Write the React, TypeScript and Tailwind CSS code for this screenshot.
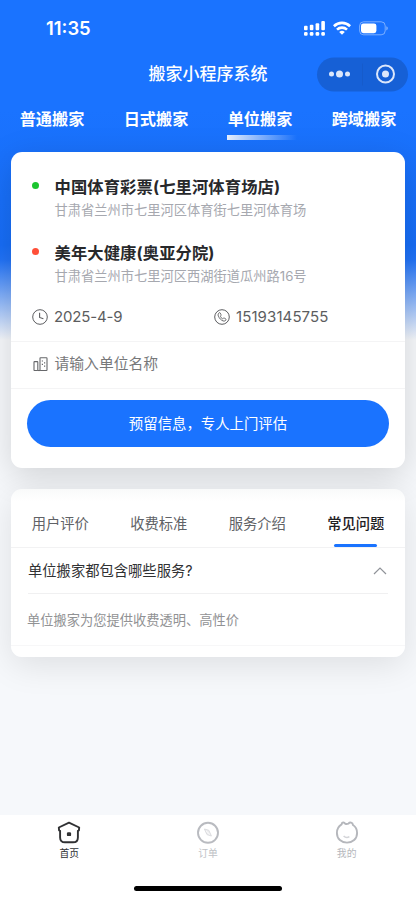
import React from "react";

interface Place {
  name: string;
  address: string;
  dot: string;
}

const serviceTabs = ["普通搬家", "日式搬家", "单位搬家", "跨域搬家"];
const infoTabs = ["用户评价", "收费标准", "服务介绍", "常见问题"];

const places: Place[] = [
  {
    name: "中国体育彩票(七里河体育场店)",
    address: "甘肃省兰州市七里河区体育街七里河体育场",
    dot: "bg-[#1bc52f]",
  },
  {
    name: "美年大健康(奥亚分院)",
    address: "甘肃省兰州市七里河区西湖街道瓜州路16号",
    dot: "bg-[#ff4f38]",
  },
];

const SignalIcon = () => (
  <svg width="21" height="15" viewBox="0 0 21 15" fill="#fff">
    <rect x="0" y="4.8" width="3.6" height="4.4" rx="1" />
    <rect x="5.8" y="3.8" width="3.6" height="5.4" rx="1" />
    <rect x="11.6" y="2.2" width="3.6" height="7" rx="1" />
    <rect x="17.3" y="0" width="3.6" height="9.2" rx="1" />
    <rect x="0" y="11" width="3.6" height="3.8" rx="1.2" />
    <rect x="5.8" y="11" width="3.6" height="3.8" rx="1.2" />
    <rect x="11.6" y="11" width="3.6" height="3.8" rx="1.2" />
    <rect x="17.3" y="11" width="3.6" height="3.8" rx="1.2" />
  </svg>
);

const WifiIcon = () => (
  <svg width="18" height="14" viewBox="0 0 18 14" fill="none" stroke="#fff" strokeWidth="2.6">
    <path d="M0.9 5.2 A11.6 11.6 0 0 1 17.1 5.2" />
    <path d="M4 8.6 A7.2 7.2 0 0 1 14 8.6" />
    <path d="M6.2 10.9 A4.2 4.2 0 0 1 11.8 10.9 L9 13.8 Z" fill="#fff" stroke="none" />
  </svg>
);

const BatteryIcon = () => (
  <svg width="30" height="15" viewBox="0 0 30 15">
    <rect x="0.6" y="0.8" width="25.6" height="13" rx="4" fill="none" stroke="#fff" strokeOpacity="0.42" />
    <rect x="2" y="2.4" width="15.4" height="9.8" rx="2.4" fill="#fff" />
    <path d="M27.4 5.2 C29.2 5.8 29.2 8.8 27.4 9.4 Z" fill="#fff" fillOpacity="0.5" />
  </svg>
);

const ClockIcon = () => (
  <svg width="16" height="16" viewBox="0 0 16 16" fill="none" stroke="#5c5d60" strokeWidth="1">
    <circle cx="8" cy="8" r="7.3" />
    <path d="M7.6 3.8 V8.4 L11.4 9.8" strokeWidth="1.1" />
  </svg>
);

const PhoneIcon = () => (
  <svg width="16" height="16" viewBox="0 0 16 16" fill="none" stroke="#5c5d60" strokeWidth="1">
    <circle cx="8" cy="8" r="7.3" />
    <path
      d="M5.4 3.7 C4.2 4.4 3.7 5.6 4.4 7.2 C5.4 9.4 7 11.1 9 11.9 C10.5 12.4 11.7 11.9 12 10.6 C12.1 10.2 12 10 11.6 9.8 L10.3 9.1 C9.9 8.9 9.6 9 9.3 9.4 C9 9.9 8.6 9.9 8.1 9.5 C7.4 9 6.9 8.4 6.6 7.8 C6.3 7.2 6.4 6.9 6.8 6.6 C7.2 6.3 7.2 6 7 5.6 L6.2 4 C6 3.6 5.8 3.5 5.4 3.7 Z"
      strokeWidth="0.9"
    />
  </svg>
);

const BuildingIcon = () => (
  <svg width="15" height="15" viewBox="0 0 15 15" fill="none" stroke="#66676a" strokeWidth="1.1">
    <rect x="1" y="4.6" width="3.8" height="8.9" rx="0.6" />
    <rect x="7" y="0.8" width="7" height="12.7" rx="0.6" />
    <path d="M4.8 13.5 H7" />
    <path d="M8.8 4 H10 M11 5.8 H12.2 M8.8 7.4 H10 M11 9.2 H12.2" strokeWidth="1.2" />
  </svg>
);

const HomeIcon = () => (
  <svg width="24" height="24" viewBox="0 0 24 24" fill="none" stroke="#303133" strokeWidth="1.9" strokeLinejoin="round">
    <path d="M12 1.6 L22.2 6.5 L21.9 9.4 L20.9 9.8 V16.4 Q20.9 21.3 16 21.3 H8 Q3.1 21.3 3.1 16.4 V9.8 L2.1 9.4 L1.8 6.5 Z" />
    <rect x="9.9" y="11.2" width="4.2" height="3.9" rx="1.2" fill="#303133" stroke="none" />
  </svg>
);

const OrderIcon = () => (
  <svg width="24" height="24" viewBox="0 0 24 24" fill="none" stroke="#b9bbc0" strokeWidth="1.9">
    <circle cx="12" cy="11.8" r="10" />
    <path d="M8.4 8 L12.8 9.3 L15.4 15 L11 13.6 Z" fill="#ececee" stroke="#dcdde0" strokeWidth="1" />
    <path d="M10 9.8 L13.8 13.4" stroke="#fff" strokeWidth="0.8" />
  </svg>
);

const MineIcon = () => (
  <svg width="24" height="24" viewBox="0 0 24 24" fill="none" stroke="#b5b7bc" strokeWidth="1.9" strokeLinejoin="round">
    <path d="M6.6 3.4 C6.8 1.2 9.2 0.9 10.2 2.8 Q12 3.2 13.4 2.6 C15 0.8 17.6 1.4 18 4 C20.8 5.8 22.1 8.8 22.1 12 C22.1 18 17.6 21.6 12 21.6 C6.4 21.6 1.9 18 1.9 12 C1.9 8.4 3.6 5.2 6.6 3.4 Z" />
    <path d="M8.6 15 Q11.4 17.8 14.4 15.6" stroke="#d3d4d8" strokeWidth="1.5" />
  </svg>
);

const navItems = [
  { label: "首页", icon: <HomeIcon />, color: "text-[#303133]" },
  { label: "订单", icon: <OrderIcon />, color: "text-[#c0c2c6]" },
  { label: "我的", icon: <MineIcon />, color: "text-[#b5b7bc]" },
];

const StatusBar: React.FC = () => (
  <div className="flex h-[56px] items-center justify-between pl-[46px] pr-[27px] text-white">
    <span className="text-[18.4px] font-semibold leading-[24px]">11:35</span>
    <div className="flex items-center">
      <SignalIcon />
      <span className="w-[8px]" />
      <WifiIcon />
      <span className="w-[8px]" />
      <BatteryIcon />
    </div>
  </div>
);

const TitleBar: React.FC = () => (
  <div className="grid h-[35px] grid-cols-[99px_1fr_99px] items-center text-white">
    <span />
    <h1 className="text-center text-[17px] font-medium leading-[24px]">搬家小程序系统</h1>
    <div className="flex h-[34px] w-[91px] translate-y-[0.5px] items-center rounded-full bg-[#1660d6]">
      <div className="flex flex-1 items-center justify-center gap-[2px]">
        <i className="size-[5px] rounded-full bg-[#dce7fb]" />
        <i className="size-[7px] rounded-full bg-[#dce7fb]" />
        <i className="size-[5px] rounded-full bg-[#dce7fb]" />
      </div>
      <i className="h-[22px] w-px bg-[#165bcb]" />
      <div className="flex flex-1 items-center justify-center">
        <div className="flex size-[19px] items-center justify-center rounded-full border-2 border-[#dce7fb]">
          <i className="size-[7px] rounded-full bg-[#dce7fb]" />
        </div>
      </div>
    </div>
  </div>
);

const App: React.FC = () => {
  return (
    <div
      className="flex h-[900px] w-[416px] flex-col overflow-hidden bg-[#f6f8fb] bg-[linear-gradient(180deg,#1a73ff_0px,#1a73ff_110px,#176df6_245px,#2273f7_260px,#f6f8fb_340px)]"
      style={{ fontFamily: 'Inter, "Noto Sans CJK SC", sans-serif' }}
    >
      <StatusBar />
      <TitleBar />

      <div className="grid h-[61px] grid-cols-4 pt-[16px] text-white">
        {serviceTabs.map((tab, index) => (
          <div key={tab} className="flex flex-col items-center">
            <span className="text-[16.2px] font-bold leading-[24px]">{tab}</span>
            {index === 2 && (
              <i className="ml-[4px] mt-[4px] h-[5px] w-[70px] bg-gradient-to-r from-white/90 to-white/0" />
            )}
          </div>
        ))}
      </div>

      <section className="mx-[11px] h-[316px] shrink-0 rounded-[11px] bg-white shadow-[0_8px_34px_rgba(0,0,0,0.15)]">
        <div className="flex h-[189px] flex-col px-[21px] pt-[23px]">
          {places.map((place) => (
            <div key={place.name} className="flex h-[66px] gap-[16px]">
              <i className={`mt-[7px] size-[6.5px] rounded-full ${place.dot}`} />
              <div>
                <p className="text-[16.3px] font-bold leading-[24px] tracking-[0.12px] text-[#27282b]">{place.name}</p>
                <p className="text-[13.25px] leading-[22px] text-[#a6a8af]">{place.address}</p>
              </div>
            </div>
          ))}
          <div className="grid grid-cols-2 text-[15px] leading-[20px] text-[#5c5d60]">
            <div className="flex items-center gap-[6px]">
              <ClockIcon />
              <span className="tracking-[-0.15px]">2025-4-9</span>
            </div>
            <div className="flex items-center gap-[6px] pl-[6px]">
              <PhoneIcon />
              <span className="tracking-[0.1px]">15193145755</span>
            </div>
          </div>
        </div>
        <div className="flex h-[48px] items-center gap-[7px] border-y border-[#f4f4f5] pb-[2px] pl-[21.5px]">
          <BuildingIcon />
          <span className="text-[14.8px] leading-[22px] text-[#77787a]">请输入单位名称</span>
        </div>
        <button className="mx-[16px] mt-[11px] block h-[47px] w-[362px] rounded-full bg-[#1a73ff] text-[14.4px] text-white">
          预留信息，专人上门评估
        </button>
      </section>

      <section className="mx-[11px] mt-[21px] h-[168px] shrink-0 rounded-[11px] bg-gradient-to-b from-[#f9fafa] to-white to-[12px] shadow-[0_8px_34px_rgba(0,0,0,0.1)]">
        <div className="grid h-[59px] grid-cols-4 border-b border-[#f2f2f3] pt-[24px]">
          {infoTabs.map((tab, index) => (
            <div
              key={tab}
              className={`flex flex-col items-center text-[14.3px] leading-[22px] ${
                index === 3 ? "font-medium text-[#1f2023]" : "text-[#606266]"
              }`}
            >
              {tab}
              {index === 3 && <i className="mt-[9px] h-[3px] w-[43px] shrink-0 rounded-full bg-[#1a73ff]" />}
            </div>
          ))}
        </div>
        <div className="mx-[17px] flex h-[46px] items-center justify-between border-b border-[#f0f0f1]">
          <span className="text-[14.3px] leading-[22px] text-[#303133]">单位搬家都包含哪些服务?</span>
          <svg className="mr-[1px]" width="14" height="8" viewBox="0 0 14 8" fill="none" stroke="#909399" strokeWidth="1.2">
            <path d="M1 7 L7 1 L13 7" />
          </svg>
        </div>
        <p className="h-[52px] border-b border-[#f7f7f8] pl-[16px] pt-[16px] text-[13.25px] leading-[20px] text-[#919294]">
          单位搬家为您提供收费透明、高性价
        </p>
      </section>

      <nav className="mt-auto h-[85px] bg-white">
        <div className="grid h-[71px] grid-cols-3 pt-[6px]">
          {navItems.map((item) => (
            <div key={item.label} className={`flex flex-col items-center ${item.color}`}>
              {item.icon}
              <span className="mt-[2px] text-[9.8px] leading-[14px]">{item.label}</span>
            </div>
          ))}
        </div>
        <div className="mx-auto h-[5px] w-[148px] rounded-full bg-black" />
      </nav>
    </div>
  );
};

export default App;
